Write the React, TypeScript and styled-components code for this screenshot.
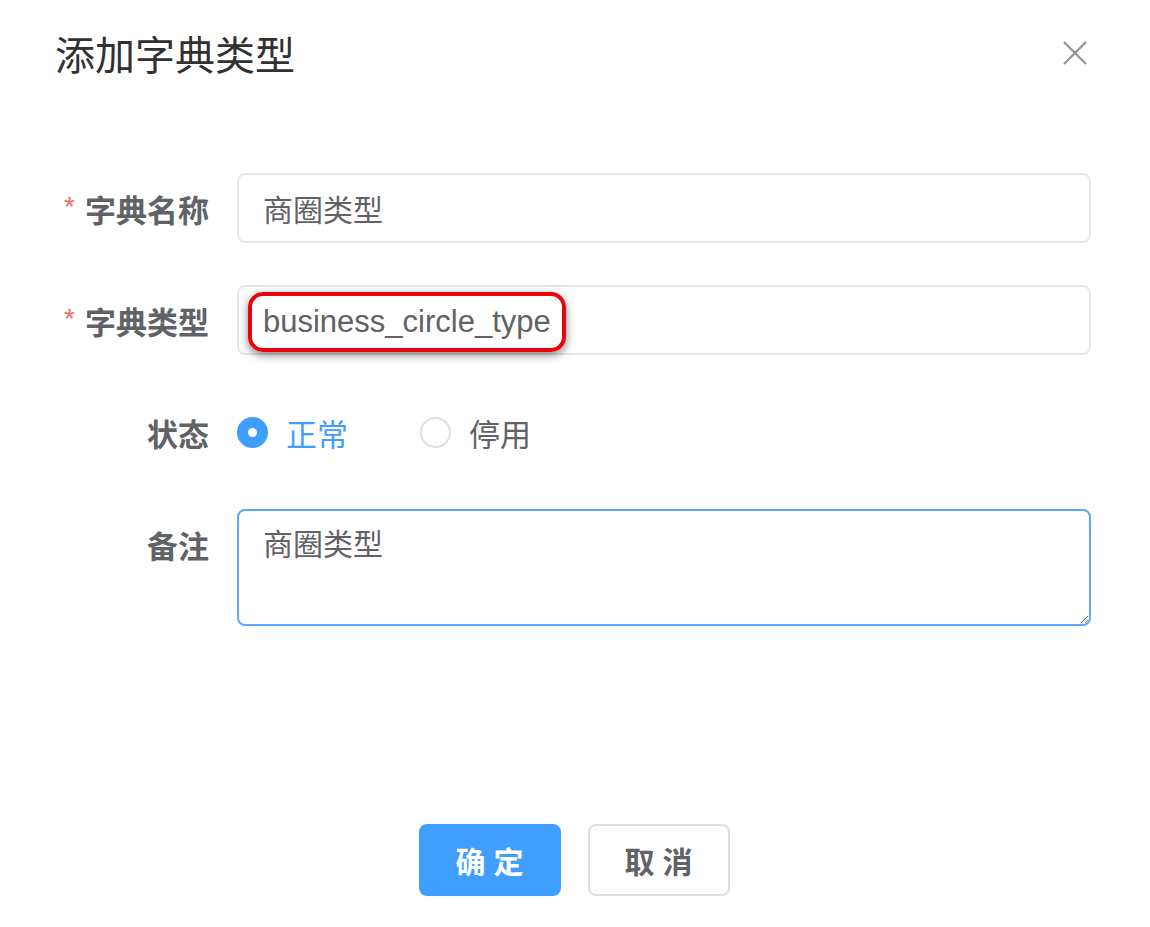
import React, { FC, useState } from "react"
import styled, { createGlobalStyle } from "styled-components";

const GlobalStyle = createGlobalStyle`
    html, body {
        margin: 0;
        padding: 0;
        background: #ffffff;
    }
    body {
        font-family: "Noto Sans CJK SC", "Noto Sans", sans-serif;
    }
`

const Dialog = styled.div`
    width: 1150px;
    height: 927px;
    background: #ffffff;
    display: flex;
    flex-direction: column;
    box-sizing: border-box;
`

const Header = styled.div`
    display: flex;
    align-items: center;
    justify-content: space-between;
    padding: 28px 60px 0 55px;
    height: 50px;
`

const Title = styled.span`
    font-size: 40px;
    line-height: 50px;
    color: #303133;
`

const CloseButton = styled.button`
    border: none;
    background: transparent;
    padding: 0;
    width: 30px;
    height: 30px;
    display: flex;
    align-items: center;
    justify-content: center;
    cursor: pointer;
`

const Form = styled.form`
    display: flex;
    flex-direction: column;
    gap: 42px;
    padding: 95px 59px 0 0;
`

const FormItem = styled.div`
    display: flex;
    align-items: flex-start;
`

const Label = styled.label<{ $required?: boolean }>`
    width: 237px;
    height: 70px;
    flex-shrink: 0;
    box-sizing: border-box;
    padding-right: 28px;
    display: flex;
    align-items: center;
    justify-content: flex-end;
    font-size: 31px;
    font-weight: 700;
    color: #606266;

    &::before {
        content: ${p => p.$required ? '"*"' : 'none'};
        color: #f56c6c;
        margin-right: 10px;
        font-family: "Liberation Sans", sans-serif;
        font-size: 28px;
        font-weight: 400;
        line-height: 1;
        align-self: center;
        padding-bottom: 2px;
    }
`

const Control = styled.div`
    flex: 1;
    position: relative;
    min-height: 70px;
    display: flex;
    align-items: center;
`

const TextInput = styled.input<{ $latin?: boolean }>`
    width: 100%;
    height: 70px;
    box-sizing: border-box;
    border: 2px solid #e4e7ed;
    border-radius: 8px;
    padding: ${p => p.$latin ? '4px 24px 0' : '0 24px'};
    font-size: ${p => p.$latin ? '31px' : '30px'};
    font-family: ${p => p.$latin ? '"Liberation Sans", Arial, sans-serif' : '"Noto Sans CJK SC", sans-serif'};
    color: #606266;
    background: #ffffff;
    outline: none;
`

const TextArea = styled.textarea`
    width: 100%;
    height: 117px;
    box-sizing: border-box;
    border: 2px solid #5aa9ff;
    border-radius: 8px;
    padding: 8px 24px;
    font-size: 30px;
    line-height: 46px;
    font-family: "Noto Sans CJK SC", sans-serif;
    color: #606266;
    background: #ffffff;
    outline: none;
    resize: vertical;
    display: block;
`

const Highlight = styled.div`
    position: absolute;
    left: 11px;
    top: 7px;
    width: 318px;
    height: 60px;
    box-sizing: border-box;
    border: 4px solid #e8040a;
    border-radius: 15px;
    box-shadow: 0 3px 8px rgba(0, 0, 0, 0.5);
    pointer-events: none;
`

const RadioGroup = styled.div`
    display: flex;
    align-items: center;
    height: 70px;
`

const RadioOption = styled.label<{ $checked: boolean }>`
    display: flex;
    align-items: center;
    margin-right: 72px;
    font-size: 31px;
    color: ${p => p.$checked ? '#409eff' : '#606266'};
    cursor: pointer;
`

const RadioDot = styled.span<{ $checked: boolean }>`
    width: 31px;
    height: 31px;
    box-sizing: border-box;
    border-radius: 50%;
    border: 2px solid ${p => p.$checked ? '#409eff' : '#dcdfe6'};
    background: ${p => p.$checked ? '#409eff' : '#ffffff'};
    margin-right: 18px;
    display: flex;
    align-items: center;
    justify-content: center;

    &::after {
        content: "";
        width: 9px;
        height: 9px;
        border-radius: 50%;
        background: #ffffff;
        display: ${p => p.$checked ? 'block' : 'none'};
    }
`

const Footer = styled.div`
    display: flex;
    justify-content: center;
    gap: 27px;
    margin-top: auto;
    padding: 0 2px 31px 0;
`

const Button = styled.button<{ $primary?: boolean }>`
    width: 142px;
    height: 72px;
    border-radius: 8px;
    border: 2px solid ${p => p.$primary ? '#409eff' : '#dcdfe6'};
    background: ${p => p.$primary ? '#409eff' : '#ffffff'};
    color: ${p => p.$primary ? '#ffffff' : '#606266'};
    font-size: 30px;
    font-weight: 700;
    font-family: "Noto Sans CJK SC", sans-serif;
    letter-spacing: 8px;
    padding: 0 0 0 8px;
    cursor: pointer;
`

const App: FC = () => {

    const [Status, setStatus] = useState<string>('0');

    return (
        <Dialog>
            <GlobalStyle />
            <Header>
                <Title>添加字典类型</Title>
                <CloseButton type='button' aria-label='close'>
                    <svg width="24" height="24" viewBox="0 0 24 24">
                        <path d="M1 1 L23 23 M23 1 L1 23" stroke="#909399" strokeWidth="2.2" fill="none" />
                    </svg>
                </CloseButton>
            </Header>
            <Form onSubmit={ (e) => e.preventDefault() }>
                <FormItem>
                    <Label $required>字典名称</Label>
                    <Control>
                        <TextInput defaultValue='商圈类型' />
                    </Control>
                </FormItem>
                <FormItem>
                    <Label $required>字典类型</Label>
                    <Control>
                        <TextInput $latin defaultValue='business_circle_type' />
                        <Highlight />
                    </Control>
                </FormItem>
                <FormItem>
                    <Label>状态</Label>
                    <RadioGroup>
                        <RadioOption $checked={ Status === '0' } onClick={ () => setStatus('0') }>
                            <RadioDot $checked={ Status === '0' } />
                            正常
                        </RadioOption>
                        <RadioOption $checked={ Status === '1' } onClick={ () => setStatus('1') }>
                            <RadioDot $checked={ Status === '1' } />
                            停用
                        </RadioOption>
                    </RadioGroup>
                </FormItem>
                <FormItem>
                    <Label>备注</Label>
                    <Control>
                        <TextArea defaultValue='商圈类型' />
                    </Control>
                </FormItem>
            </Form>
            <Footer>
                <Button $primary type='button'>确定</Button>
                <Button type='button'>取消</Button>
            </Footer>
        </Dialog>
    )
}

export default App
